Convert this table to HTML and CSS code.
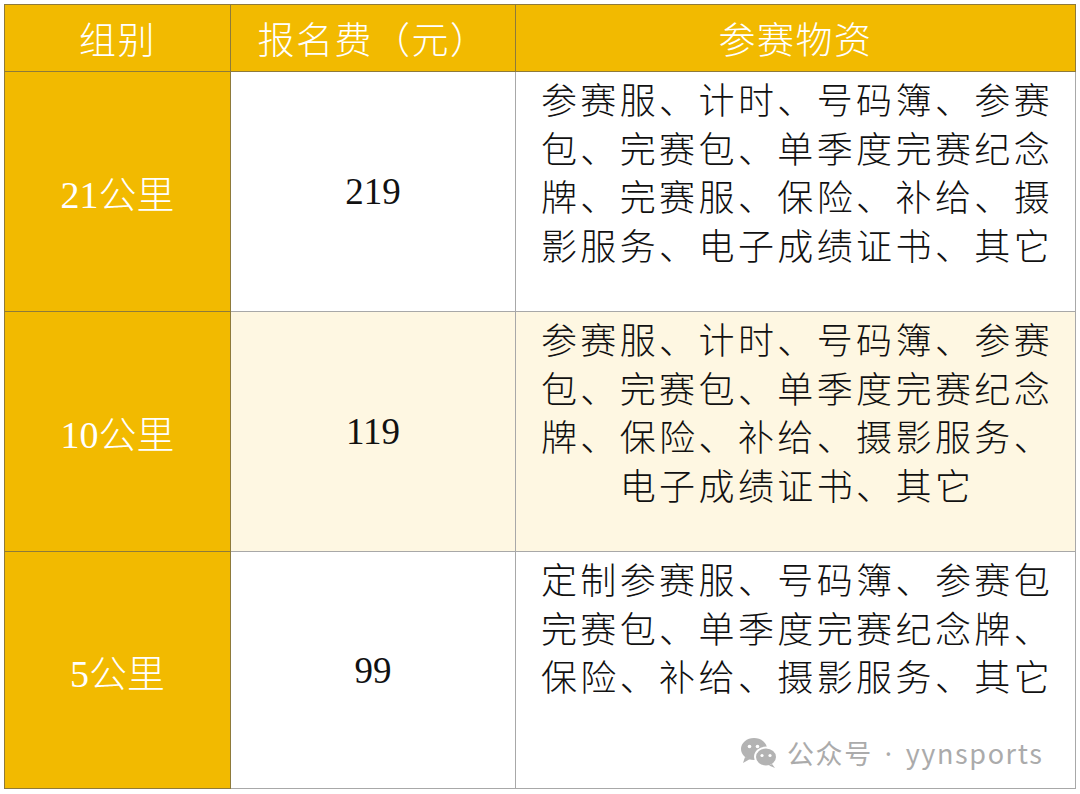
FILE: index.html
```html
<!DOCTYPE html>
<html lang="zh">
<head>
<meta charset="utf-8">
<link rel="stylesheet" href="styles.css">
</head>
<body>
<div class="wrap">
<table class="fees">
  <colgroup>
    <col class="c1"><col class="c2"><col class="c3">
  </colgroup>
  <thead>
    <tr><th>组别</th><th>报名费（元）</th><th>参赛物资</th></tr>
  </thead>
  <tbody>
    <tr class="r">
      <td class="grp"><span class="num">21</span>公里</td>
      <td class="price">219</td>
      <td class="items">参赛服、计时、号码簿、参赛<br>包、完赛包、单季度完赛纪念<br>牌、完赛服、保险、补给、摄<br>影服务、电子成绩证书、其它</td>
    </tr>
    <tr class="r alt">
      <td class="grp"><span class="num">10</span>公里</td>
      <td class="price">119</td>
      <td class="items">参赛服、计时、号码簿、参赛<br>包、完赛包、单季度完赛纪念<br>牌、保险、补给、摄影服务、<br>电子成绩证书、其它</td>
    </tr>
    <tr class="r last">
      <td class="grp"><span class="num">5</span>公里</td>
      <td class="price">99</td>
      <td class="items">定制参赛服、号码簿、参赛包<br>完赛包、单季度完赛纪念牌、<br>保险、补给、摄影服务、其它</td>
    </tr>
  </tbody>
</table>
<div class="mark">
  <svg class="wx" viewBox="0 0 40 32" width="40" height="32">
    <ellipse cx="15" cy="12" rx="13" ry="11" fill="#b3b3b3"/>
    <path d="M6 20 L4 26 L11 22 Z" fill="#b3b3b3"/>
    <circle cx="10.5" cy="9.5" r="1.8" fill="#fff"/>
    <circle cx="18.5" cy="9.5" r="1.8" fill="#fff"/>
    <ellipse cx="27" cy="20" rx="11" ry="9.5" fill="#b3b3b3" stroke="#fff" stroke-width="2"/>
    <path d="M33 27 L36 31 L30 28.5 Z" fill="#b3b3b3"/>
    <circle cx="23" cy="18.5" r="1.6" fill="#fff"/>
    <circle cx="31" cy="18.5" r="1.6" fill="#fff"/>
  </svg>
  <span class="mtext">公众号<span class="dot">·</span>yynsports</span>
</div>
</div>
</body>
</html>
```

FILE: styles.css
```css
html, body {
  margin: 0;
  padding: 0;
  background: #ffffff;
}
.wrap {
  position: relative;
  width: 1080px;
  height: 794px;
  padding: 4px 0 0 4px;
  box-sizing: border-box;
  overflow: hidden;
}
.fees {
  border-collapse: collapse;
  table-layout: fixed;
  width: 1071px;
  font-family: "Liberation Serif", "Noto Sans CJK SC", serif;
}
.c1 { width: 226px; }
.c2 { width: 285px; }
.c3 { width: 560px; }
.fees th {
  background: #f2ba00;
  color: #ffffff;
  font-weight: 300;
  font-size: 37px;
  height: 66px;
  padding: 0;
  border: 1px solid #8e7a3a;
  letter-spacing: 1.5px;
  font-family: "Noto Sans CJK SC", sans-serif;
}
.fees td {
  border: 1px solid #a8a8a8;
  padding: 0;
  height: 240px;
  box-sizing: border-box;
  background: #ffffff;
  color: #111111;
}
.fees tr.last td { height: 237px; }
.fees tr.alt td { background: #fef7e2; }
.fees td.grp {
  background: #f2ba00;
  color: #ffffff;
  border-color: #8e7a3a;
  text-align: center;
  font-size: 38px;
  font-weight: 300;
  font-family: "Noto Sans CJK SC", sans-serif;
}
.fees tr.alt td.grp { background: #f2ba00; }
.num {
  font-family: "Liberation Serif", serif;
  font-size: 38px;
  font-weight: 400;
}
.fees td.price {
  text-align: center;
  font-size: 37px;
  font-family: "Liberation Serif", serif;
}
.fees td.items {
  vertical-align: top;
  text-align: center;
  font-family: "Noto Sans CJK SC", sans-serif;
  font-size: 36px;
  letter-spacing: 3.4px;
  line-height: 48.5px;
  padding-top: 2px;
  padding-left: 3px;
  white-space: nowrap;
  font-weight: 300;
}
.mark {
  position: absolute;
  left: 739px;
  top: 733px;
  display: flex;
  align-items: center;
  gap: 8px;
}
.wx { display: block; }
.mtext {
  font-family: "Noto Sans CJK SC", sans-serif;
  font-size: 27px;
  color: #ababab;
  letter-spacing: 1.6px;
}
.dot {
  font-family: "Noto Sans", sans-serif;
  margin: 0 12px;
}
```
